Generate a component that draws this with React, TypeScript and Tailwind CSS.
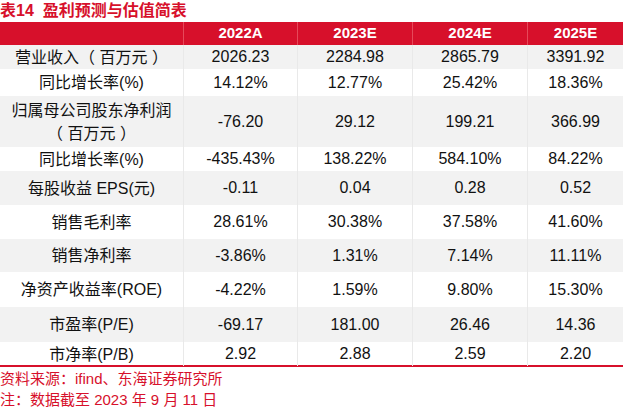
const rows = [
  { label: ["营业收入（ 百万元 ）"], values: ["2026.23", "2284.98", "2865.79", "3391.92"], h: "h-[24px]", gray: true },
  { label: ["同比增长率(%)"], values: ["14.12%", "12.77%", "25.42%", "18.36%"], h: "h-[27px]", gray: false },
  { label: ["归属母公司股东净利润", "（ 百万元 ）"], values: ["-76.20", "29.12", "199.21", "366.99"], h: "h-[51px]", gray: true },
  { label: ["同比增长率(%)"], values: ["-435.43%", "138.22%", "584.10%", "84.22%"], h: "h-[24px]", gray: false },
  { label: ["每股收益 EPS(元)"], values: ["-0.11", "0.04", "0.28", "0.52"], h: "h-[34px]", gray: true },
  { label: ["销售毛利率"], values: ["28.61%", "30.38%", "37.58%", "41.60%"], h: "h-[34px]", gray: false },
  { label: ["销售净利率"], values: ["-3.86%", "1.31%", "7.14%", "11.11%"], h: "h-[33px]", gray: true },
  { label: ["净资产收益率(ROE)"], values: ["-4.22%", "1.59%", "9.80%", "15.30%"], h: "h-[35px]", gray: false },
  { label: ["市盈率(P/E)"], values: ["-69.17", "181.00", "26.46", "14.36"], h: "h-[35px]", gray: true },
  { label: ["市净率(P/B)"], values: ["2.92", "2.88", "2.59", "2.20"], h: "h-[23px]", gray: false },
];

const years = ["2022A", "2023E", "2024E", "2025E"];

const grid = "grid grid-cols-[183px_114px_115px_115px_96px]";

export default function App() {
  return (
    <div className="w-[623px] h-[407px] bg-white overflow-hidden font-['Liberation_Sans','Noto_Sans_CJK_SC',sans-serif] text-[#111]">
      <div className="h-[22px] pt-[1px] text-[16px] leading-[20px] font-bold text-[#d7102b]">
        表14&nbsp;&nbsp;盈利预测与估值简表
      </div>

      <div className="border-b-2 border-[#d7102b]">
        <div className={`${grid} h-[23px] bg-[#d7102b] text-white font-bold text-[15px]`}>
          <div />
          {years.map((y) => (
            <div key={y} className="flex items-center justify-center border-l border-[#e6495a]">
              {y}
            </div>
          ))}
        </div>

        {rows.map((r, i) => (
          <div key={i} className={`${grid} ${r.h} ${r.gray ? "bg-[#f2f2f2]" : "bg-white"} text-[16px]`}>
            <div className="flex flex-col items-center justify-center leading-[23px] whitespace-pre">
              {r.label.map((l) => (
                <span key={l}>{l}</span>
              ))}
            </div>
            {r.values.map((v, j) => (
              <div key={j} className="flex items-center justify-center border-l border-[#e9e9e9]">
                {v}
              </div>
            ))}
          </div>
        ))}
      </div>

      <div className="pt-[1px] text-[15px] leading-[21px] text-[#d7102b]">
        <div>资料来源：ifind、东海证券研究所</div>
        <div>注：数据截至 2023 年 9 月 11 日</div>
      </div>
    </div>
  );
}
